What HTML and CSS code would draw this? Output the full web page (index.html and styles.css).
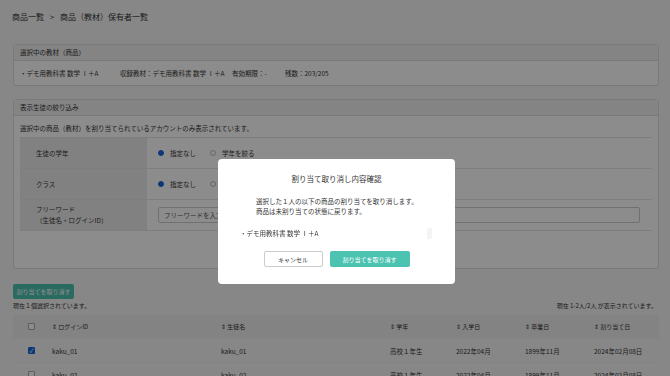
FILE: index.html
```html
<!DOCTYPE html>
<html lang="ja">
<head>
  <meta charset="UTF-8">
  <title>商品（教材）保有者一覧</title>
  <link rel="stylesheet" href="styles.css">
</head>
<body>
  <div class="page">
    <div class="breadcrumb">商品一覧 <span class="sep">&gt;</span> 商品（教材）保有者一覧</div>

    <div class="panel panel-product">
      <div class="panel-head">選択中の教材（商品）</div>
      <div class="panel-body product-row">
        <span class="p-name">・デモ用教科書 数学 Ⅰ＋A</span>
        <span class="p-inc">収録教材：デモ用教科書 数学 Ⅰ＋A</span>
        <span class="p-exp">有効期限：-</span>
        <span class="p-rest">残数：203/205</span>
      </div>
    </div>

    <div class="panel panel-filter">
      <div class="panel-head">表示生徒の絞り込み</div>
      <div class="panel-body filter-body">
        <div class="note">選択中の商品（教材）を割り当てられているアカウントのみ表示されています。</div>
        <div class="filter-table">
          <div class="f-label">生徒の学年</div>
          <div class="f-value">
            <span class="radio on"></span><span class="r-text">指定なし</span>
            <span class="radio"></span><span class="r-text">学年を絞る</span>
          </div>
          <div class="f-label">クラス</div>
          <div class="f-value">
            <span class="radio on"></span><span class="r-text">指定なし</span>
            <span class="radio"></span><span class="r-text">クラスを絞る</span>
          </div>
          <div class="f-label two">フリーワード<br>（生徒名・ログインID）</div>
          <div class="f-value">
            <div class="input">フリーワードを入力</div>
          </div>
        </div>
      </div>
    </div>

    <div class="actions">
      <button class="btn-teal small">割り当てを取り消す</button>
    </div>
    <div class="counts">
      <span>現在１個選択されています。</span>
      <span>現在 1-2人/2人 が表示されています。</span>
    </div>

    <div class="list">
      <div class="row head">
        <div class="c-check"><span class="box"></span></div>
        <div class="c-id">⇕ ログインID</div>
        <div class="c-name">⇕ 生徒名</div>
        <div class="c-grade">⇕ 学年</div>
        <div class="c-in">⇕ 入学日</div>
        <div class="c-out">⇕ 卒業日</div>
        <div class="c-date">⇕ 割り当て日</div>
      </div>
      <div class="row">
        <div class="c-check"><span class="box checked">✓</span></div>
        <div class="c-id">kaku_01</div>
        <div class="c-name">kaku_01</div>
        <div class="c-grade">高校１年生</div>
        <div class="c-in">2022年04月</div>
        <div class="c-out">1899年11月</div>
        <div class="c-date">2024年02月08日</div>
      </div>
      <div class="row">
        <div class="c-check"><span class="box"></span></div>
        <div class="c-id">kaku_02</div>
        <div class="c-name">kaku_02</div>
        <div class="c-grade">高校１年生</div>
        <div class="c-in">2022年04月</div>
        <div class="c-out">1899年11月</div>
        <div class="c-date">2024年02月08日</div>
      </div>
    </div>
  </div>

  <div class="overlay">
    <div class="modal">
      <div class="m-title">割り当て取り消し内容確認</div>
      <div class="m-text">
        選択した１人の以下の商品の割り当てを取り消します。<br>
        商品は未割り当ての状態に戻ります。
      </div>
      <div class="m-list">
        <span>・デモ用教科書 数学 Ⅰ＋A</span>
        <span class="m-scroll"></span>
      </div>
      <div class="m-buttons">
        <button class="btn-cancel">キャンセル</button>
        <button class="btn-teal big">割り当てを取り消す</button>
      </div>
    </div>
  </div>
</body>
</html>
```

FILE: styles.css
```css
* { box-sizing: border-box; }
html, body {
  margin: 0;
  height: 100%;
  overflow: hidden;
}
body {
  font-family: "Noto Sans CJK JP", "Noto Sans", sans-serif;
  background: #f6f6f6;
  color: #333;
  font-size: 6.5px;
}
.page {
  padding: 11px 11px 0 13px;
}
.breadcrumb {
  font-size: 8px;
  line-height: 12px;
  color: #333;
  margin-left: -1px;
}
.breadcrumb .sep { margin: 0 4px; }

.panel {
  background: #fff;
  border: 1px solid #ddd;
  border-radius: 3px;
}
.panel-product { margin-top: 21px; }
.panel-filter { margin-top: 13px; }
.panel-head {
  background: #f0f0f0;
  border-bottom: 1px solid #ddd;
  height: 16px;
  line-height: 15px;
  padding-left: 6px;
  font-size: 6.5px;
}
.product-row {
  display: flex;
  height: 24px;
  align-items: center;
  padding-left: 6px;
}
.p-name { width: 100px; }
.p-inc { width: 112px; }
.p-exp { width: 53px; }

.filter-body {
  padding: 6px 6px 37px 6px;
}
.note { line-height: 12px; }
.filter-table {
  margin-top: 3px;
  display: grid;
  grid-template-columns: 127px 1fr;
  border-top: 1px solid #e6e6e6;
}
.f-label {
  background: #ececec;
  height: 31px;
  display: flex;
  align-items: center;
  padding-left: 16px;
  border-bottom: 1px solid #e6e6e6;
  line-height: 11px;
}
.f-value {
  height: 31px;
  display: flex;
  align-items: center;
  padding-left: 11px;
  border-bottom: 1px solid #e6e6e6;
}
.radio {
  width: 6px;
  height: 6px;
  border-radius: 50%;
  border: 1px solid #bbb;
  margin-right: 6px;
}
.radio.on {
  background: #1565d8;
  border-color: #1565d8;
}
.r-text { margin-right: 14px; }
.input {
  width: 482px;
  height: 16px;
  border: 1px solid #ccc;
  border-radius: 2px;
  line-height: 14px;
  padding-left: 5px;
  color: #555;
}

.actions { margin-top: 15px; }
button {
  font-family: inherit;
  border: none;
  cursor: pointer;
}
.btn-teal {
  background: #4cc3b1;
  color: #fff;
  border-radius: 2px;
}
.btn-teal.small {
  width: 61px;
  height: 15px;
  font-size: 6px;
  padding: 0;
}
.counts {
  display: flex;
  justify-content: space-between;
  line-height: 12px;
  margin-top: 1px;
  font-size: 6px;
  padding-right: 2px;
}
.list { margin-top: 3px; }
.row {
  display: flex;
  align-items: center;
  height: 24px;
  border-bottom: 1px solid #eee;
}
.row.head {
  background: #efefef;
  font-size: 6px;
}
.c-check { width: 39px; padding-left: 15px; }
.c-id { width: 169px; }
.c-name { width: 169px; }
.c-grade { width: 66px; }
.c-in { width: 69px; }
.c-out { width: 69px; }
.box {
  display: block;
  width: 7px;
  height: 7px;
  border: 1px solid #aaa;
  background: #fff;
  border-radius: 1px;
  font-size: 6px;
  line-height: 5px;
  text-align: center;
  color: #fff;
}
.box.checked {
  background: #1565d8;
  border-color: #1565d8;
}

.overlay {
  position: fixed;
  inset: 0;
  background: rgba(0, 0, 0, 0.45);
}
.modal {
  position: absolute;
  left: 218px;
  top: 159px;
  width: 237px;
  height: 125px;
  background: #fff;
  border-radius: 4px;
  padding-top: 14px;
}
.m-title {
  text-align: center;
  font-size: 7.5px;
  line-height: 12px;
}
.m-text {
  margin-top: 11px;
  padding-left: 38px;
  font-size: 6.5px;
  line-height: 10px;
}
.m-list {
  margin-top: 11px;
  padding-left: 22px;
  display: flex;
  align-items: center;
  height: 12px;
  position: relative;
}
.m-scroll {
  position: absolute;
  left: 209px;
  top: 1px;
  width: 5px;
  height: 11px;
  background: #f4f4f4;
}
.m-buttons {
  margin-top: 12px;
  display: flex;
  justify-content: center;
  gap: 7px;
}
.btn-cancel {
  width: 59px;
  height: 16px;
  background: #fff;
  border: 1px solid #ccc;
  border-radius: 2px;
  font-size: 6px;
  color: #333;
  padding: 0;
}
.btn-teal.big {
  width: 80px;
  height: 16px;
  font-size: 6px;
  padding: 0;
}
```
